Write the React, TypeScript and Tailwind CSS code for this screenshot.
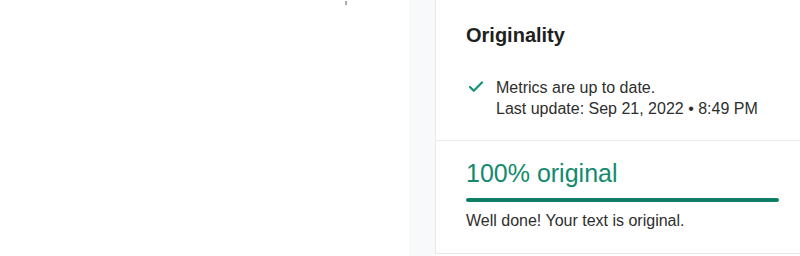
import React from 'react';
import { Check } from 'lucide-react';

const App: React.FC = () => {
  return (
    <div className="w-[800px] h-[256px] flex bg-white font-['Liberation_Sans',Arial,sans-serif] overflow-hidden">
      {/* editor area */}
      <div className="w-[409px] shrink-0 pl-[345px] pt-[1px]">
        <div className="w-[2px] h-[4px] bg-[#8a8a8a] opacity-70"></div>
      </div>

      {/* gutter */}
      <div className="w-[26px] shrink-0 bg-[#f8f9fa]"></div>

      {/* sidebar panel */}
      <div className="flex-1 h-[254px] bg-white border-l border-b border-[#e6e8ea] flex flex-col">
        <div className="px-[30px] pt-[23px] pb-[21px] border-b border-[#e8eaec]">
          <h2 className="text-[20px] leading-[24px] font-bold text-[#1f1f1f]">Originality</h2>
          <div className="mt-[30px] flex items-start">
            <Check className="mt-[1px] ml-[1px] w-[18px] h-[18px] text-[#16937a] shrink-0" strokeWidth={3} />
            <div className="ml-[11px] text-[16px] leading-[21px] text-[#2e2e2e]">
              <p>Metrics are up to date.</p>
              <p>Last update: Sep 21, 2022 • 8:49 PM</p>
            </div>
          </div>
        </div>

        <div className="px-[30px] pt-[17px]">
          <div className="text-[25px] leading-[30px] text-[#138a6e]">100% original</div>
          <div className="mt-[10px] mr-[-9px] h-[4px] rounded-full bg-[#0e7f64]"></div>
          <p className="mt-[9px] text-[16px] leading-[20px] text-[#2e2e2e]">Well done! Your text is original.</p>
        </div>
      </div>
    </div>
  );
};

export default App;
